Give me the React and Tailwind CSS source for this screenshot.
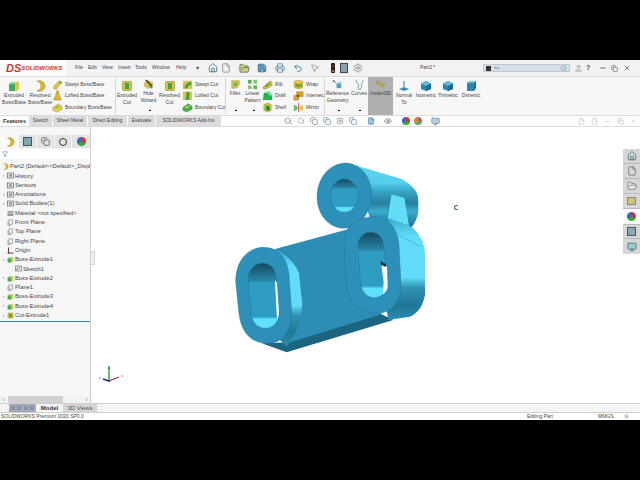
import { Home, File, FolderOpen, Save, Printer, Undo2, MousePointer2, Search, User, X, Minus, Copy, Settings, ChevronLeft, ChevronRight, Filter, Monitor, Eye } from "lucide-react";

const menus = [
  ["File", "w-[13px]"],
  ["Edit", "w-[14px]"],
  ["View", "w-[16px]"],
  ["Insert", "w-[17px]"],
  ["Tools", "w-[17px]"],
  ["Window", "w-[24px]"],
  ["Help", "w-[16px]"],
];

const tabs = [
  ["Sketch", "w-[24px]"],
  ["Sheet Metal", "w-[35px]"],
  ["Direct Editing", "w-[40px]"],
  ["Evaluate", "w-[28px]"],
  ["SOLIDWORKS Add-Ins", "w-[66px]"],
];

const tree = [
  { label: "Part2  (Default<<Default>_Displ", icon: "part", indent: 2 },
  { label: "History", icon: "folder", arrow: true },
  { label: "Sensors", icon: "folder" },
  { label: "Annotations", icon: "folder", arrow: true },
  { label: "Solid Bodies(1)", icon: "folder", arrow: true },
  { label: "Material <not specified>", icon: "material" },
  { label: "Front Plane", icon: "plane" },
  { label: "Top Plane", icon: "plane" },
  { label: "Right Plane", icon: "plane" },
  { label: "Origin", icon: "origin" },
  { label: "Boss-Extrude1", icon: "boss", arrow: true },
  { label: "Sketch1", icon: "sketch", indent: 15 },
  { label: "Boss-Extrude2", icon: "boss", arrow: true },
  { label: "Plane1", icon: "plane" },
  { label: "Boss-Extrude3", icon: "boss", arrow: true },
  { label: "Boss-Extrude4", icon: "boss", arrow: true },
  { label: "Cut-Extrude1", icon: "cut", arrow: true },
];

function RibbonIcon({ kind, size = 12 }) {
  return (
    <svg width={size} height={size} viewBox="0 0 12 12" className="shrink-0">
      {kind === "boss" && (
        <>
          <path d="M5 2h6v7l-2 2H3V5z" fill="#e3c63f" />
          <path d="M1 4h6v7H1z" fill="#3fae55" />
          <path d="M1 4l2-2h4v2z" fill="#8fd69b" />
        </>
      )}
      {kind === "revolve" && <path d="M3 1c5-1 8 2 8 5s-3 6-8 5c3-1 4-3 4-5S6 2 3 1z" fill="#dfb52c" stroke="#9a7a14" strokeWidth="0.5" />}
      {kind === "sweep" && (
        <>
          <path d="M2 11c-1-3 1-4 3-6l3-3 3 2-3 3c-2 2-3 3-3 4z" fill="#e6c640" stroke="#96801c" strokeWidth="0.5" />
          <path d="M8 2l3 2-1 1-3-2z" fill="#4aae5c" />
        </>
      )}
      {kind === "loft" && <path d="M5 1h2l1 5 2 4v1H2v-1l2-4z" fill="#e2b72e" stroke="#97791a" strokeWidth="0.5" />}
      {kind === "boundary" && (
        <>
          <path d="M1 6l6-4 4 3v3l-6 3-4-2z" fill="#e6cc45" stroke="#97801c" strokeWidth="0.5" />
          <path d="M3 6l4-2 2 1-4 2z" fill="#7abf4d" />
        </>
      )}
      {kind === "cut" && (
        <>
          <rect x="1.5" y="1.5" width="9" height="9" rx="1" fill="#dcc240" stroke="#8f8a2a" strokeWidth="0.6" />
          <path d="M4 3h4v6H4z" fill="#38a550" />
        </>
      )}
      {kind === "hole" && (
        <>
          <path d="M1 4l5-3 5 3v4l-5 3-5-3z" fill="#d6bd5a" />
          <path d="M3 1l7 7" stroke="#333" strokeWidth="1.5" />
          <path d="M7 7l3 3" stroke="#3da14e" strokeWidth="2" />
        </>
      )}
      {kind === "sweepcut" && (
        <>
          <rect x="1" y="2" width="10" height="9" fill="#dcc240" />
          <path d="M3 10c0-4 3-6 7-7v3c-3 1-4 2-4 4z" fill="#3da14e" />
        </>
      )}
      {kind === "loftcut" && (
        <>
          <rect x="1" y="2" width="10" height="9" fill="#e2c333" />
          <path d="M5 2h3v9H4z" fill="#3aa24f" />
        </>
      )}
      {kind === "boundcut" && (
        <>
          <path d="M1 6l6-4 4 3v3l-6 3-4-2z" fill="#42ad55" stroke="#2b7d3b" strokeWidth="0.5" />
          <path d="M3 6l4-2 2 1-4 2z" fill="#e3cd4b" />
        </>
      )}
      {kind === "fillet" && (
        <>
          <path d="M2 2h8v3c0 3-2 5-5 5H2z" fill="#e2cb45" stroke="#8f8a2a" strokeWidth="0.6" />
          <path d="M4 4h4v2c0 1-1 2-2 2H4z" fill="#62b95a" />
        </>
      )}
      {kind === "pattern" && (
        <>
          <rect x="1" y="1" width="4" height="4" fill="#52b45f" />
          <rect x="7" y="1" width="4" height="4" fill="#8fc562" />
          <rect x="1" y="7" width="4" height="4" fill="#8fc562" />
          <rect x="7" y="7" width="4" height="4" fill="#52b45f" />
        </>
      )}
      {kind === "rib" && (
        <>
          <path d="M1 9l8-7 2 2v3l-7 4H2z" fill="#d7bd35" stroke="#85761a" strokeWidth="0.5" />
          <path d="M3 8l5-4 1 1-5 4z" fill="#39a44f" />
        </>
      )}
      {kind === "wrap" && (
        <>
          <ellipse cx="6" cy="3.5" rx="5" ry="2" fill="#e4cf4a" stroke="#88801f" strokeWidth="0.5" />
          <path d="M1 3.5v5c0 1 2 2.5 5 2.5s5-1.500 5-2.500v-5c0 1-2 2-5 2s-5-1-5-2z" fill="#cfae22" />
          <rect x="3" y="6" width="6" height="2" fill="#3da14e" />
        </>
      )}
      {kind === "draft" && (
        <>
          <path d="M2 3h6l3 3v5H1z" fill="#18b84a" />
          <path d="M4 1h5l2 5H8z" fill="#8ce0a0" />
        </>
      )}
      {kind === "intersect" && (
        <>
          <path d="M4 2h7v5H6v4H1V6h3z" fill="#dca92c" stroke="#86691a" strokeWidth="0.5" />
          <rect x="4" y="5" width="3" height="3" fill="#7f5d12" />
        </>
      )}
      {kind === "shell" && (
        <>
          <path d="M2 3l4-2 4 2v6l-4 2-4-2z" fill="#d9c83f" stroke="#76761f" strokeWidth="0.5" />
          <path d="M4 4h4v5H4z" fill="#2aa04a" />
          <path d="M6 4l2 2v3H6z" fill="#15702f" />
        </>
      )}
      {kind === "mirror" && (
        <>
          <path d="M1 3l4 2v3l-4 2z" fill="#62bd61" />
          <path d="M11 3L7 5v3l4 2z" fill="#e2c94a" />
          <path d="M6 1v10" stroke="#d33b6a" strokeWidth="0.8" />
        </>
      )}
      {kind === "reference" && (
        <>
          <path d="M2 2l3 3" stroke="#3b8cae" strokeWidth="1" />
          <path d="M5 5h5v5H5z" fill="#4f9fc4" />
          <path d="M5 5l2-2h4l-1 2z" fill="#9fcfe3" />
          <circle cx="2" cy="2" r="1" fill="#2a6d8b" />
        </>
      )}
      {kind === "curves" && <path d="M2 1c0 3 3 4 3 6s-2 3 0 4 4-1 3-3 2-5 2-7" fill="none" stroke="#4b8fae" strokeWidth="0.9" />}
      {kind === "instant" && (
        <>
          <path d="M1 4l2-2 8 5-2 2z" fill="#d3be45" stroke="#79712a" strokeWidth="0.5" />
          <path d="M2 3l8 5" stroke="#3f7fb6" strokeWidth="0.7" strokeDasharray="1 1" />
        </>
      )}
      {kind === "normal" && (
        <>
          <path d="M6 1v6" stroke="#317b9e" strokeWidth="1" />
          <path d="M6 7l5 2-5 2-5-2z" fill="#3c8fb3" />
        </>
      )}
      {kind === "iso" && (
        <>
          <path d="M6 1l5 2.500v5.500L6 11 1 9V3.500z" fill="#2d86ad" />
          <path d="M6 1l5 2.500L6 6 1 3.500z" fill="#66b9d8" />
          <path d="M6 6l5-2.500V9l-5 2z" fill="#1f6c90" />
        </>
      )}
      {kind === "dim" && (
        <>
          <path d="M2 3h7v8H2z" fill="#2f86ad" />
          <path d="M2 3l2-2h7L9 3z" fill="#73bedb" />
          <path d="M9 3l2-2v7l-2 3z" fill="#1f6c90" />
        </>
      )}
    </svg>
  );
}

// high = icon sits higher and smaller, text starts right under it
function BigButton({ icon, lines, width, high, active, dot }) {
  return (
    <div className={`relative flex flex-col items-center shrink-0 h-full ${width} ${active ? "bg-[#b0b0b0]" : ""}`}>
      <div className={`flex flex-col items-center ${high ? "pt-[2px]" : "pt-[3px]"}`}>
        <RibbonIcon kind={icon} size={high ? 11 : 12} />
      </div>
      <div className="flex flex-col items-center text-[5px] leading-[7px] text-[#444] whitespace-nowrap">
        {lines.map((line) => (
          <span key={line}>{line}</span>
        ))}
      </div>
      {dot && <div className="absolute bottom-[4px] left-1/2 w-[2px] h-px bg-black"></div>}
    </div>
  );
}

function ToolColumn({ items, width }) {
  return (
    <div className={`flex flex-col justify-between py-[2px] shrink-0 ${width}`}>
      {items.map(([icon, label]) => (
        <div key={label} className="flex items-center gap-[2px] h-[12px] text-[5px] text-[#444] whitespace-nowrap">
          <RibbonIcon kind={icon} size={11} />
          <span>{label}</span>
        </div>
      ))}
    </div>
  );
}

function Divider() {
  return <div className="w-px self-stretch my-[1px] bg-[#d5d5d5] shrink-0"></div>;
}

function TreeIcon({ kind }) {
  if (kind === "boss") return <RibbonIcon kind="boss" size={7} />;
  if (kind === "cut") return <RibbonIcon kind="cut" size={7} />;
  if (kind === "part") return <RibbonIcon kind="revolve" size={7} />;
  return (
    <svg width="7" height="7" viewBox="0 0 7 7" className="shrink-0">
      {kind === "folder" && (
        <>
          <rect x="0.500" y="1" width="6" height="5" fill="#e8e8e8" stroke="#666" strokeWidth="0.7" />
          <rect x="2" y="2.500" width="3" height="2" fill="#888" />
        </>
      )}
      {kind === "material" && (
        <>
          <rect x="0.500" y="1" width="6" height="5" fill="#999" />
          <path d="M1 3h5" stroke="#eee" strokeWidth="0.7" />
        </>
      )}
      {kind === "plane" && <path d="M2 0.800h3.500v4.500H2zM1 2v4.500h3" fill="none" stroke="#777" strokeWidth="0.6" />}
      {kind === "origin" && (
        <>
          <path d="M1.500 0.500v5.500H6.500" fill="none" stroke="#333" strokeWidth="0.9" />
          <circle cx="1.500" cy="6" r="1" fill="#b33" />
        </>
      )}
      {kind === "sketch" && (
        <>
          <rect x="0.500" y="1" width="6" height="5" fill="#dbe4ea" stroke="#667" strokeWidth="0.6" />
          <path d="M1 5l4-3" stroke="#555" strokeWidth="0.7" />
        </>
      )}
    </svg>
  );
}

function PartModel() {
  return (
    <svg width="210" height="205" viewBox="0 0 630 615" className="absolute left-[134px] top-[28px]">
      <defs>
        <linearGradient id="sideTop" x1="0" y1="0" x2="0" y2="1">
          <stop offset="0" stopColor="#5ad4f2" />
          <stop offset="0.3" stopColor="#56cfee" />
          <stop offset="0.42" stopColor="#3aa9cb" />
          <stop offset="0.62" stopColor="#277f9f" />
          <stop offset="0.74" stopColor="#3aaccf" />
          <stop offset="1" stopColor="#20708f" />
        </linearGradient>
        <linearGradient id="sideRight" x1="0" y1="0" x2="0" y2="1">
          <stop offset="0" stopColor="#37aed0" />
          <stop offset="0.18" stopColor="#62dcf8" />
          <stop offset="0.58" stopColor="#62dcf8" />
          <stop offset="0.68" stopColor="#2f93b5" />
          <stop offset="0.86" stopColor="#1f7696" />
          <stop offset="1" stopColor="#2b8fb3" />
        </linearGradient>
        <linearGradient id="holeFill" x1="0" y1="0" x2="0" y2="1">
          <stop offset="0" stopColor="#134a60" />
          <stop offset="0.26" stopColor="#2a83a3" />
          <stop offset="0.3" stopColor="#2f9dc2" />
          <stop offset="0.82" stopColor="#2f9dc2" />
          <stop offset="0.86" stopColor="#5fe0fb" />
          <stop offset="1" stopColor="#5fe0fb" />
        </linearGradient>
      </defs>

      {/* back boss */}
      <path d="M370 25L530 72Q580 100 580 135V170Q575 200 558 218L440 200L400 100Z" fill="url(#sideTop)" />
      <path d="M498 118L538 128L552 212L486 190Z" fill="#63dcf8" />
      <path d="M498 118L486 190" stroke="#1f6f8e" strokeWidth="2" fill="none" />
      <ellipse cx="358" cy="122" rx="82" ry="98" transform="rotate(5 358 122)" fill="#2d90b8" stroke="#1d6a88" strokeWidth="1" />
      <ellipse cx="358" cy="122" rx="41" ry="50" fill="url(#holeFill)" stroke="#1d6a88" strokeWidth="1" />

      {/* plate between the front bosses */}
      <path d="M150 282L372 222L470 480L190 570Z" fill="#2d8db5" />
      <path d="M110 565L185 592L505 495L470 478L195 562Z" fill="#1b6580" />

      {/* left boss side */}
      <path d="M150 282Q205 310 222 355L232 450Q228 520 185 575L130 520Z" fill="url(#sideRight)" />

      {/* right boss side */}
      <path d="M490 190L560 215Q600 250 600 295V420Q590 470 555 485L490 495L460 330Z" fill="url(#sideRight)" />
      <path d="M520 240L588 275" stroke="#1f7292" strokeWidth="1" fill="none" />

      {/* right face */}
      <path d="M357 262C357 210 400 185 445 185C495 185 518 225 522 270L528 390C530 440 495 475 460 475C400 475 368 440 364 385Z" fill="#2d90b8" stroke="#1d6a88" strokeWidth="1" />
      <path d="M398 275C398 250 415 232 437 232C462 232 474 250 476 275L488 385C488 410 470 428 448 428C425 428 410 410 407 385Z" fill="url(#holeFill)" stroke="#1d6a88" strokeWidth="1" />
      <path d="M468 322L486 335L488 390C488 405 482 412 474 418L476 380Z" fill="#ffffff" />
      <path d="M466 318L484 328L482 336L468 330Z" fill="#12384a" />

      {/* left face */}
      <path d="M32 380C32 310 75 277 115 277C165 277 188 315 192 360L200 470C202 530 170 565 130 565C70 565 45 525 40 460Z" fill="#2d90b8" stroke="#1d6a88" strokeWidth="1" />
      <path d="M70 370C70 345 90 325 112 325C140 325 152 345 154 370L162 470C162 500 145 520 122 520C95 520 80 500 78 470Z" fill="url(#holeFill)" stroke="#1d6a88" strokeWidth="1" />
      <path d="M150 375L156 385L162 470C162 480 160 488 156 495Z" fill="#ffffff" />
    </svg>
  );
}

function Triad() {
  return (
    <svg width="28" height="24" viewBox="0 0 28 24" className="absolute left-[7px] top-[237px]">
      <path d="M11 17V3" stroke="#2fa84a" strokeWidth="1.500" />
      <path d="M11 1l-1.500 4h3z" fill="#2fa84a" />
      <path d="M11 17l10-4" stroke="#a0324a" strokeWidth="1.300" />
      <path d="M11 17l-6-2" stroke="#1f2f7a" strokeWidth="1.500" />
      <circle cx="11" cy="17" r="1" fill="#1f2f7a" />
      <text x="23" y="13" fontSize="4" fill="#555">x</text>
      <text x="1" y="15" fontSize="4" fill="#555">z</text>
    </svg>
  );
}

export default function App() {
  return (
    <div className="w-[640px] h-[480px] bg-black py-[60px] overflow-hidden font-['Liberation_Sans',sans-serif]">
      <div className="h-[360px] flex flex-col bg-white">
        {/* title bar */}
        <div className="h-[16px] flex items-center bg-[#f2f2f2] text-[#444] shrink-0">
          <div className="w-[66px] h-full flex items-center pl-[6px] bg-[#fbfbfb] text-[#c73a35] shrink-0">
            <span className="w-[15px] text-[11px] font-bold italic leading-none">DS</span>
            <span className="text-[6px] font-bold italic leading-none">SOLIDWORKS</span>
          </div>
          <div className="flex ml-[9px] text-[5px] shrink-0">
            {menus.map(([label, width]) => (
              <span key={label} className={width}>{label}</span>
            ))}
          </div>
          <span className="ml-[3px] w-[13px] text-[6px] text-[#345]">✦</span>
          <div className="flex items-center shrink-0">
            <Home size={10} color="#3f6f86" className="mr-[3px]" />
            <File size={10} color="#8a8a8a" className="mr-[8px]" />
            <FolderOpen size={11} color="#5b7f57" fill="#d8c98a" className="mr-[7px]" />
            <Save size={10} color="#31668a" fill="#7aa9c9" className="mr-[8px]" />
            <Printer size={10} color="#4a7ea1" className="mr-[8px]" />
            <Undo2 size={10} color="#3c7fae" className="mr-[7px]" />
            <MousePointer2 size={10} color="#999" className="mr-[11px]" />
            <div className="w-[4px] h-[10px] bg-[#222] rounded-[1px] mr-[5px] flex flex-col items-center justify-around">
              <div className="w-[2px] h-[2px] bg-[#d22] rounded-full"></div>
              <div className="w-[2px] h-[2px] bg-[#da2] rounded-full"></div>
            </div>
            <div className="w-[8px] h-[10px] bg-[#8ba0a8] border border-[#445] mr-[5px]"></div>
            <Settings size={10} color="#888" />
          </div>
          <span className="ml-[57px] w-[18px] text-[5px] shrink-0">Part2 *</span>
          <div className="ml-[45px] w-[87px] h-[8px] flex items-center bg-[#d7e0e8] border border-[#c0c8cf] px-[2px] gap-[3px] shrink-0">
            <div className="w-[5px] h-[5px] bg-[#333]"></div>
            <span className="text-[4px] text-[#777] flex-1">fay</span>
            <Search size={7} color="#6f8fa8" />
          </div>
          <User size={9} color="#aaa" fill="#ccc" className="ml-[4px] shrink-0" />
          <span className="ml-[3px] text-[7px] font-bold text-[#444] w-[10px]">?</span>
          <Minus size={8} color="#333" className="ml-[3px] shrink-0" />
          <Copy size={7} color="#555" className="ml-[4px] shrink-0" />
          <X size={8} color="#444" className="ml-[5px] shrink-0" />
        </div>

        {/* ribbon */}
        <div className="h-[40px] flex bg-[#f7f7f7] border-y border-[#dcdcdc] shrink-0">
          <BigButton icon="boss" lines={["Extruded", "Boss/Base"]} width="w-[28px]" />
          <BigButton icon="revolve" lines={["Revolved", "Boss/Base"]} width="w-[24px]" />
          <ToolColumn
            width="w-[63px]"
            items={[
              ["sweep", "Swept Boss/Base"],
              ["loft", "Lofted Boss/Base"],
              ["boundary", "Boundary Boss/Base"],
            ]}
          />
          <Divider />
          <BigButton icon="cut" lines={["Extruded", "Cut"]} width="w-[22px]" />
          <BigButton icon="hole" lines={["Hole", "Wizard"]} width="w-[21px]" high dot />
          <BigButton icon="cut" lines={["Revolved", "Cut"]} width="w-[21px]" />
          <div className="w-[2px] shrink-0"></div>
          <ToolColumn
            width="w-[43px]"
            items={[
              ["sweepcut", "Swept Cut"],
              ["loftcut", "Lofted Cut"],
              ["boundcut", "Boundary Cut"],
            ]}
          />
          <Divider />
          <BigButton icon="fillet" lines={["Fillet"]} width="w-[18px]" high dot />
          <BigButton icon="pattern" lines={["Linear", "Pattern"]} width="w-[17px]" high dot />
          <div className="w-[1px] shrink-0"></div>
          <ToolColumn
            width="w-[31px]"
            items={[
              ["rib", "Rib"],
              ["draft", "Draft"],
              ["shell", "Shell"],
            ]}
          />
          <ToolColumn
            width="w-[31px]"
            items={[
              ["wrap", "Wrap"],
              ["intersect", "Intersect"],
              ["mirror", "Mirror"],
            ]}
          />
          <Divider />
          <BigButton icon="reference" lines={["Reference", "Geometry"]} width="w-[25px]" high dot />
          <BigButton icon="curves" lines={["Curves"]} width="w-[18px]" high dot />
          <BigButton icon="instant" lines={["Instant3D"]} width="w-[25px]" high active />
          <BigButton icon="normal" lines={["Normal", "To"]} width="w-[22px]" />
          <BigButton icon="iso" lines={["Isometric"]} width="w-[22px]" />
          <BigButton icon="iso" lines={["Trimetric"]} width="w-[22px]" />
          <BigButton icon="dim" lines={["Dimetric"]} width="w-[24px]" />
        </div>

        {/* tabs and heads-up toolbar */}
        <div className="h-[11px] flex items-center border-b border-[#dcdcdc] bg-white shrink-0">
          <div className="w-[29px] h-full flex items-center justify-center text-[5.500px] font-bold text-[#333] shrink-0">Features</div>
          {tabs.map(([label, width]) => (
            <div key={label} className={`${width} h-full flex items-center justify-center bg-[#dcdcdc] border-r border-white text-[5px] text-[#444] whitespace-nowrap shrink-0`}>
              {label}
            </div>
          ))}
          <div className="flex items-center gap-[5px] ml-[62px] shrink-0">
            <Search size={8} color="#777" />
            <Search size={8} color="#999" />
            <Copy size={8} color="#6f8996" />
            <Copy size={8} color="#4f87a6" />
            <Settings size={8} color="#7f8f6f" />
            <Copy size={8} color="#4f87a6" />
          </div>
          <div className="flex items-center ml-[10px] shrink-0">
            <File size={8} color="#4f87a6" fill="#9cc7dd" />
            <Eye size={8} color="#666" className="ml-[9px]" />
            <div className="ml-[10px] w-[8px] h-[8px] rounded-full bg-[conic-gradient(#d33_0_33%,#3a3_0_66%,#36c_0)]"></div>
            <div className="ml-[4px] w-[8px] h-[8px] rounded-full bg-[conic-gradient(#a66_0_33%,#6a6_0_66%,#c84_0)]"></div>
            <Monitor size={9} color="#6f8fa8" fill="#b8cfdd" className="ml-[9px]" />
          </div>
          <div className="flex items-center gap-[6px] ml-[138px] shrink-0">
            <File size={7} color="#bbb" />
            <File size={7} color="#bbb" />
            <Minus size={7} color="#bbb" />
            <Copy size={7} color="#bbb" />
            <X size={7} color="#bbb" />
          </div>
        </div>

        {/* body */}
        <div className="flex-1 flex min-h-0">
          <div className="w-[91px] flex flex-col bg-[#f6f6f6] border-r border-[#d0d0d0] shrink-0">
            <div className="h-[8px] shrink-0"></div>
            <div className="h-[13px] flex bg-[#e3e3e3] shrink-0">
              <div className="w-[19px] flex items-center justify-center bg-[#fafafa]"><RibbonIcon kind="revolve" size={10} /></div>
              <div className="w-[18px] flex items-center justify-center border-r border-[#f6f6f6]"><div className="w-[9px] h-[9px] bg-[#7fa7b5] border border-[#456]"></div></div>
              <div className="w-[18px] flex items-center justify-center border-r border-[#f6f6f6]"><Copy size={9} color="#555" /></div>
              <div className="w-[17px] flex items-center justify-center border-r border-[#f6f6f6]"><div className="w-[8px] h-[8px] rounded-full border border-[#333]"></div></div>
              <div className="w-[18px] flex items-center justify-center"><div className="w-[9px] h-[9px] rounded-full bg-[conic-gradient(#d33_0_33%,#3a3_0_66%,#36c_0)]"></div></div>
            </div>
            <div className="h-[10px] flex items-center pl-[2px] mt-px bg-white shrink-0">
              <Filter size={6} color="#3c7fae" />
            </div>
            <div className="mt-[3px] flex flex-col text-[5.800px] text-[#444] border-b border-[#2f86ad] pb-[1px]">
              {tree.map((row) => (
                <div key={row.label} className="h-[9.300px] flex items-center whitespace-nowrap overflow-hidden">
                  <div style={{ width: row.indent ?? 7 }} className="shrink-0 flex items-center justify-center text-[5px] text-[#777]">
                    {row.arrow ? "›" : ""}
                  </div>
                  <TreeIcon kind={row.icon} />
                  <span className="ml-px">{row.label}</span>
                </div>
              ))}
            </div>
            <div className="flex-1"></div>
            <div className="h-[7px] flex items-center justify-between px-px bg-[#f2f2f2] shrink-0">
              <ChevronLeft size={5} color="#555" />
              <div className="flex-1 h-full ml-[2px] mr-[21px] bg-[#d0d0d0]"></div>
              <ChevronRight size={5} color="#555" />
            </div>
          </div>

          <div className="relative flex-1 bg-white">
            <div className="absolute left-0 top-[124px] w-[4px] h-[14px] bg-[#eeeeee] border-y border-r border-[#d8d8d8]"></div>
            <PartModel />
            <Triad />
            <div className="absolute left-[363px] top-[78px] w-[5px] h-[5px] rounded-full border border-[#3a6f95] border-r-transparent"></div>

            {/* task pane */}
            <div className="absolute right-0 top-[22px] w-[17px] flex flex-col bg-[#d6d6d6]">
              <div className="h-[15px] flex items-center justify-center border-b border-[#bbb]"><Home size={10} color="#44727f" /></div>
              <div className="h-[15px] flex items-center justify-center border-b border-[#bbb]"><File size={10} color="#777" /></div>
              <div className="h-[15px] flex items-center justify-center border-b border-[#bbb]"><FolderOpen size={10} color="#777" fill="#e8e8e8" /></div>
              <div className="h-[15px] flex items-center justify-center border-b border-[#bbb]"><div className="w-[9px] h-[8px] bg-[#cfc27a] border border-[#887]"></div></div>
              <div className="h-[15px] flex items-center justify-center bg-white"><div className="w-[9px] h-[9px] rounded-full bg-[conic-gradient(#c33_0_33%,#3a3_0_66%,#36c_0)]"></div></div>
              <div className="h-[15px] flex items-center justify-center border-y border-[#bbb]"><div className="w-[9px] h-[9px] bg-[#8aa9b3] border border-[#456]"></div></div>
              <div className="h-[15px] flex items-center justify-center"><Monitor size={10} color="#44727f" fill="#9cc" /></div>
            </div>
          </div>
        </div>

        {/* model tabs */}
        <div className="h-[10px] flex items-center bg-[#f4f4f4] border-y border-[#d0d0d0] shrink-0">
          <div className="ml-[9px] w-[27px] h-full flex items-center justify-around px-px bg-[#a3a8b8]">
            <div className="w-[4px] h-[4px] bg-[#8d92a4]"></div>
            <div className="w-[4px] h-[4px] bg-[#8d92a4]"></div>
            <div className="w-[4px] h-[4px] bg-[#8d92a4]"></div>
            <div className="w-[4px] h-[4px] bg-[#8d92a4]"></div>
          </div>
          <div className="w-[27px] h-full flex items-center justify-center text-[6px] font-bold text-[#333]">Model</div>
          <div className="w-[34px] h-full flex items-center justify-center bg-[#d4d4d4] text-[6px] text-[#555]">3D Views</div>
        </div>

        {/* status bar */}
        <div className="h-[7px] flex items-center bg-white text-[5px] text-[#444] shrink-0">
          <span className="ml-px w-[526px]">SOLIDWORKS Premium 2020 SP0.0</span>
          <span className="w-[71px]">Editing Part</span>
          <span className="w-[26px]">MMGS</span>
          <Settings size={5} color="#888" />
        </div>
      </div>
    </div>
  );
}
